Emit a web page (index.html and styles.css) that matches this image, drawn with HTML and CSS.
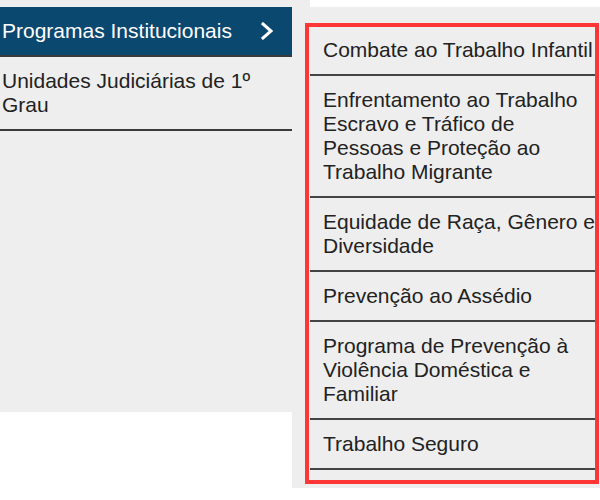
FILE: index.html
```html
<!DOCTYPE html>
<html lang="pt-BR">
<head>
<meta charset="utf-8">
<title>Menu</title>
<link rel="stylesheet" href="styles.css">
</head>
<body>
<div class="page">
  <nav class="sidebar">
    <a class="side-item active" href="#">
      <span>Programas Institucionais</span>
      <svg class="chev" width="12" height="18" viewBox="0 0 12 18"><polyline points="2,2 10,9 2,16" fill="none" stroke="#fff" stroke-width="3" stroke-linecap="square"/></svg>
    </a>
    <a class="side-item" href="#">Unidades Judiciárias de 1º Grau</a>
  </nav>
  <div class="panel">
    <div class="panel-top"></div>
    <ul class="submenu">
      <li>Combate ao Trabalho Infantil</li>
      <li>Enfrentamento ao Trabalho Escravo e Tráfico de Pessoas e Proteção ao Trabalho Migrante</li>
      <li>Equidade de Raça, Gênero e Diversidade</li>
      <li>Prevenção ao Assédio</li>
      <li>Programa de Prevenção à Violência Doméstica e Familiar</li>
      <li>Trabalho Seguro</li>
    </ul>
  </div>
</div>
</body>
</html>
```

FILE: styles.css
```css
html, body {
  margin: 0;
  padding: 0;
  background: #ffffff;
}
body {
  font-family: "Liberation Sans", Arial, sans-serif;
  font-size: 21px;
  line-height: 24px;
  color: #222222;
}
.page {
  display: flex;
  align-items: flex-start;
  width: 600px;
}
.sidebar {
  width: 292px;
  height: 412px;
  box-sizing: border-box;
  padding-top: 7px;
  background: #eeeeee;
  display: flex;
  flex-direction: column;
}
.side-item {
  display: block;
  padding: 12px 2px;
  color: #222222;
  text-decoration: none;
  border-bottom: 2px solid #3a3a3a;
}
.side-item.active {
  display: flex;
  align-items: center;
  justify-content: space-between;
  height: 48px;
  box-sizing: content-box;
  padding: 0 19px 0 2px;
  background: #0b4870;
  color: #ffffff;
}
.chev {
  display: block;
  flex: none;
}
.panel {
  flex: 1;
  background: #eeeeee;
  padding-bottom: 4px;
}
.panel-top {
  height: 7px;
  margin-left: 18px;
  background: #ffffff;
}
.submenu {
  list-style: none;
  margin: 16px 1px 0 13px;
  padding: 3px 0 14px 5px;
  outline: 4px solid #ff3636;
  outline-offset: -4px;
}
.submenu li {
  padding: 12px 1px 12px 13px;
  border-bottom: 2px solid #444444;
}
```
